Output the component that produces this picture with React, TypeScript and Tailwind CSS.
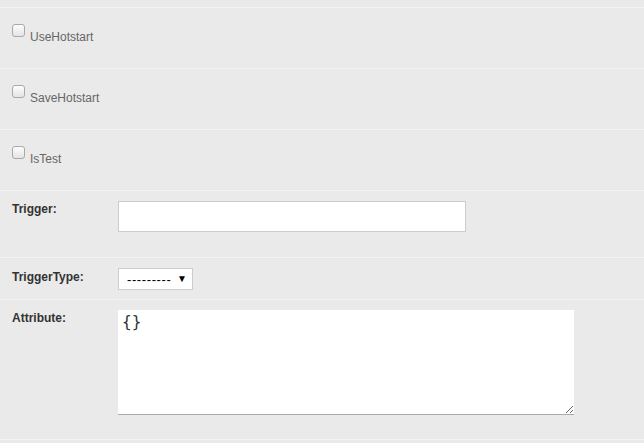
import { useState } from "react";

const checkRows = ["UseHotstart", "SaveHotstart", "IsTest"];

const FakeCheckbox = () => (
  <span className="mt-[16px] block h-[13px] w-[13px] shrink-0 rounded-[3px] border border-[#a9a9a9] bg-gradient-to-b from-[#fdfdfd] to-[#e4e4e4]" />
);

const App = () => {
  const [attribute, setAttribute] = useState<string>("{}");

  return (
    <div
      className="min-h-[443px] w-[644px] bg-[#eaeaea] text-[12px]"
      style={{ fontFamily: '"Liberation Sans", Arial, sans-serif' }}
    >
      <div className="h-[8px] border-b border-[#f3f3f3]" />

      {checkRows.map((name) => (
        <div
          key={name}
          className="flex h-[61px] items-start gap-[5px] border-b border-[#f3f3f3] pl-[12px]"
        >
          <FakeCheckbox />
          <label className="mt-[22px] leading-[14px] text-[#666]">{name}</label>
        </div>
      ))}

      <div className="flex h-[67px] items-start border-b border-[#f3f3f3] pl-[12px] pt-[10px]">
        <label className="mt-[1px] w-[106px] font-bold leading-[14px] text-[#333]">
          Trigger:
        </label>
        <input
          type="text"
          className="h-[31px] w-[348px] border border-[#cccccc] bg-white px-[5px] outline-none"
        />
      </div>

      <div className="flex h-[42px] items-start border-b border-[#f3f3f3] pl-[12px] pt-[10px]">
        <label className="mt-[2px] w-[106px] font-bold leading-[14px] text-[#333]">
          TriggerType:
        </label>
        <div className="flex h-[22px] w-[75px] items-center justify-between border border-[#cccccc] bg-white pl-[8px] pr-[5px] text-[13px] text-black">
          <span className="leading-none tracking-[0.6px]">---------</span>
          <span className="text-[10px] leading-none">▼</span>
        </div>
      </div>

      <div className="flex h-[140px] items-start border-b border-[#f3f3f3] pl-[12px] pt-[10px]">
        <label className="mt-[1px] w-[106px] font-bold leading-[14px] text-[#333]">
          Attribute:
        </label>
        <textarea
          value={attribute}
          onChange={(e) => setAttribute(e.target.value)}
          className="h-[105px] w-[456px] border-0 border-b border-[#aaaaaa] bg-white px-[4px] py-[2px] text-[16px] leading-[20px] text-[#333] outline-none"
          style={{ fontFamily: '"DejaVu Sans Mono", monospace' }}
        />
      </div>
    </div>
  );
};

export default App;
